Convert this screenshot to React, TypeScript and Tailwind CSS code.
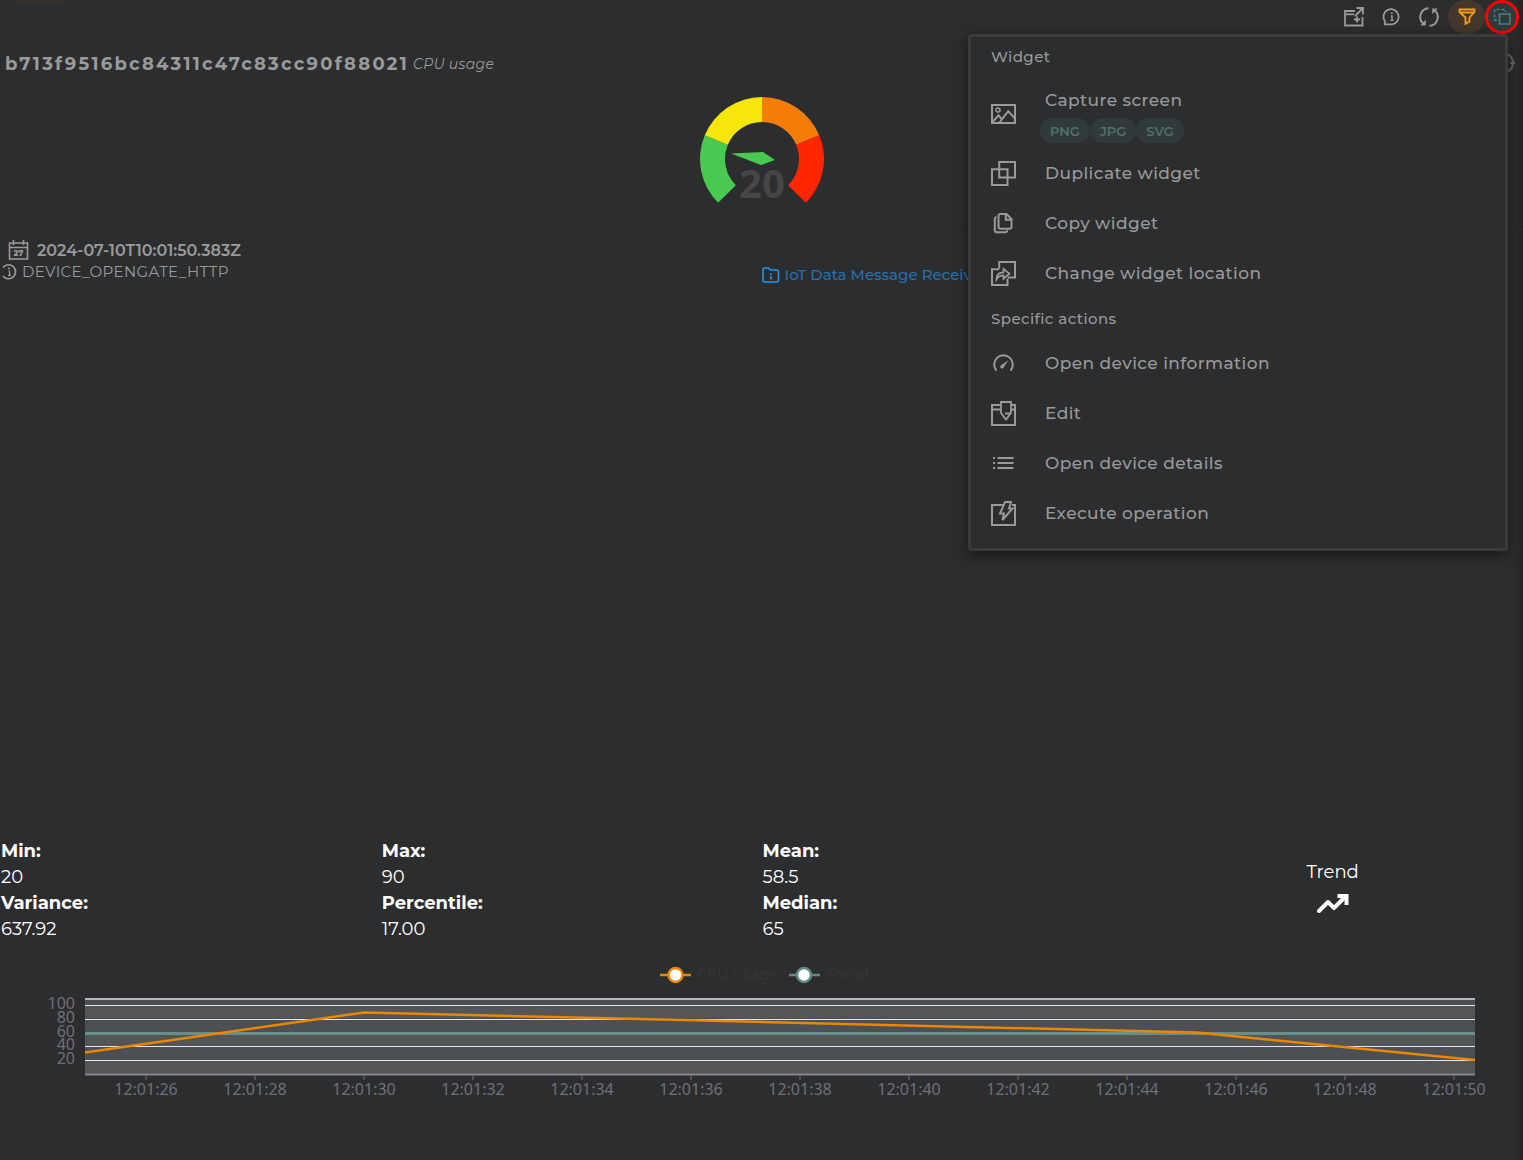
import type { ReactNode } from 'react';

const tools = [
  { id: 'open', label: 'Open in new window' },
  { id: 'info', label: 'Information' },
  { id: 'refresh', label: 'Refresh' },
];

const widgetActions = [
  { icon: 'duplicate', label: 'Duplicate widget' },
  { icon: 'copy', label: 'Copy widget' },
  { icon: 'location', label: 'Change widget location' },
];

const specificActions = [
  { icon: 'gauge', label: 'Open device information' },
  { icon: 'edit', label: 'Edit' },
  { icon: 'list', label: 'Open device details' },
  { icon: 'execute', label: 'Execute operation' },
];

const stats = [
  [{ label: 'Min:', value: '20' }, { label: 'Variance:', value: '637.92' }],
  [{ label: 'Max:', value: '90' }, { label: 'Percentile:', value: '17.00' }],
  [{ label: 'Mean:', value: '58.5' }, { label: 'Median:', value: '65' }],
];

const toolIcons: Record<string, ReactNode> = {
  open: (
    <g strokeWidth="1.8">
      <path d="M14 6H4v14.500h17.500V12" />
      <path d="M4 9.300h9" />
      <path d="M14 11 21 4M15.500 3H22v6.500" />
      <path d="M16 11.500v6M13 14.500h6" />
    </g>
  ),
  info: (
    <>
      <path d="M5.800 19.300v-3.200A7.600 7.600 0 1 1 13 19.300z" strokeWidth="1.800" />
      <path d="M12 11h1v4M11.500 15.200h3" strokeWidth="1.400" />
      <circle cx="12.800" cy="8.300" r="1" fill="currentColor" stroke="none" />
    </>
  ),
  refresh: (
    <>
      <path d="M11.500 3.200A8.800 8.800 0 0 0 6.500 18.800M12.500 20.800A8.800 8.800 0 0 0 17.500 5.200" />
      <path d="M8.800 14.800v5.700H3.300zM15.200 9.200V3.500h5.500z" fill="currentColor" stroke="none" />
    </>
  ),
};

const menuIcons: Record<string, ReactNode> = {
  image: (
    <>
      <path d="M2 4h23v18H2z" />
      <circle cx="8" cy="9" r="2" strokeWidth="1.600" />
      <path d="m3 20.500 5.500-6.200 3.300 4 6.400-8L24.500 17M9.500 21.500l3-4" />
    </>
  ),
  duplicate: <path d="M9.200 2H25v15.500H9.200zM2 9.200h15.500V25H2z" />,
  copy: (
    <>
      <path d="M10.300 4h6.200l5 5v8a1.800 1.800 0 0 1-1.800 1.800h-9.400A1.800 1.800 0 0 1 8.500 17V5.800A1.800 1.800 0 0 1 10.300 4z" />
      <path d="M15.800 4v5.700h5.500" />
      <path d="M6.500 7A2 2 0 0 0 4.800 9v11.300A2 2 0 0 0 6.800 22.300h8.400a2 2 0 0 0 2-2" />
    </>
  ),
  location: (
    <>
      <path d="M9.200 8.500V2H25v15.500h-7M9.200 9.200H2V25h15.500v-6.500" />
      <path d="M6.500 19.500c0-5 2.500-7.200 7-7.200V8.800l6 5-6 5v-3.500c-3 0-5.200 1-7 4.200z" strokeWidth="1.800" />
    </>
  ),
  gauge: (
    <>
      <path d="M6.500 20.700A9.300 9.300 0 1 1 20.500 20.700" />
      <path d="m18.500 10-7.700 5.500a1.700 1.700 0 1 0 2.400 2.400z" fill="currentColor" stroke="none" />
    </>
  ),
  edit: (
    <>
      <path d="M10.500 5H2v20h23V5h-4M2 9.500h8M21 9.500h4" />
      <path d="M11 2h10v11l-5 6.500-5-6.500zM15 13.500h6" strokeWidth="1.800" />
    </>
  ),
  list: (
    <path d="M7.500 8H23.500M7.500 13H23.500M7.500 18H23.500M3 8h2M3 13h2M3 18h2" />
  ),
  execute: (
    <>
      <path d="M13 5H2v20h23V5h-3" />
      <path d="M15 2h6l-2 6.500h3.500L12.500 20l1.500-6.500h-4z" />
    </>
  ),
};

function MenuIcon({ name }: { name: string }) {
  return (
    <svg className="h-[26px] w-[26px] shrink-0" viewBox="1 0 26 26" fill="none" stroke="currentColor" strokeWidth="2" aria-hidden="true">
      {menuIcons[name]}
    </svg>
  );
}

function MenuItem({ icon, label }: { icon: string; label: string }) {
  return (
    <li>
      <button type="button" className="flex h-[50px] w-full items-center gap-7 px-5 text-left tracking-wide">
        <MenuIcon name={icon} />
        <span>{label}</span>
      </button>
    </li>
  );
}

function WidgetMenu() {
  return (
    <div className="absolute right-[15px] top-[34px] w-[540px] rounded border-[3px] border-[#3a3b3d] bg-[#2c2d2f] pb-[10px] text-[17px] font-medium leading-6 tracking-wide text-[#999a9a] shadow-[0_4px_14px_rgba(0,0,0,0.5)]">
      <h2 className="px-5 pt-2 text-[15px] leading-6">Widget</h2>
      <div className="flex h-[79px] items-center gap-7 px-5 pt-[10px]">
        <MenuIcon name="image" />
        <div className="flex flex-col gap-1 pt-[2px]">
          <span className="leading-7">Capture screen</span>
          <div className="-ml-[5px] flex">
            {['PNG', 'JPG', 'SVG'].map((format) => (
              <button key={format} type="button" className="h-[25px] rounded-full bg-[#313a3b] px-[10px] text-[13px] font-semibold leading-6 tracking-normal text-[#4e6f6b]">
                {format}
              </button>
            ))}
          </div>
        </div>
      </div>
      <ul>
        {widgetActions.map((a) => <MenuItem key={a.label} {...a} />)}
      </ul>
      <h2 className="px-5 pb-[7px] pt-[9px] text-[15px] leading-6">Specific actions</h2>
      <ul>
        {specificActions.map((a) => <MenuItem key={a.label} {...a} />)}
      </ul>
    </div>
  );
}

// Point on the dial, angle in degrees counter-clockwise from the right
function polar(r: number, deg: number) {
  const a = (deg * Math.PI) / 180;
  return `${63 + r * Math.cos(a)} ${63 - r * Math.sin(a)}`;
}

function Gauge() {
  const colors = ['#49c950', '#f7e60b', '#f47d07', '#ff2600'];
  return (
    <svg className="h-[126px] w-[126px]" viewBox="0 0 126 126" role="img" aria-label="CPU usage 20">
      {colors.map((color, i) => {
        const from = 225 - i * 67.5;
        const to = from - 67.5;
        return (
          <path
            key={color}
            fill={color}
            d={`M${polar(62, from)}A62 62 0 0 1 ${polar(62, to)}L${polar(37, to)}A37 37 0 0 0 ${polar(37, from)}z`}
          />
        );
      })}
      <path d="M32 57.500 64 56l12 8-14 5z" fill="#49c950" />
      <text x="63" y="102" textAnchor="middle" fill="#464646" className="font-['Noto_Sans',sans-serif] text-[40px] font-bold">20</text>
    </svg>
  );
}

function Chart() {
  const toY = (v: number) => 118 - v * 0.69;
  const bands = [0, 20, 40, 60, 80, 100];
  return (
    <svg className="w-full" viewBox="0 0 1523 150" role="img" aria-label="CPU usage over time" fontSize="16" fill="#6e7079">
      <g strokeWidth="2.500">
        <path d="M660 19h31" stroke="#e88700" />
        <circle cx="675.500" cy="19" r="7" fill="#fff" stroke="#e88700" />
        <path d="M789 19h31" stroke="#5f8a87" />
        <circle cx="804" cy="19" r="7" fill="#fff" stroke="#5f8a87" />
      </g>
      <text x="697" y="24" fill="#333435">CPU usage</text>
      <text x="826" y="24" fill="#333435">Trend</text>

      {bands.map((v, i) => (
        <rect key={v} x="85" width="1390" y={v === 100 ? 42 : toY(v + 20)} height={v === 100 ? 7 : 13.8} fill={i % 2 ? '#4c4f54' : '#545557'} />
      ))}
      <path d="M85 43h1390" stroke="#b4b5bc" strokeWidth="2" />
      {[100, 80, 40, 20].map((v) => (
        <path key={v} d={`M85 ${Math.round(toY(v)) + 0.5}h1390`} stroke="#e0e6f1" />
      ))}
      <path d="M85 77.500h1390" stroke="#668f8c" strokeWidth="3" />
      <path d="M85 96.500 364 56.500 640 63l557 13.500 278 27.500" fill="none" stroke="#e88700" strokeWidth="2.500" strokeLinejoin="round" />
      <path d="M85 118.500h1390" stroke="#85868d" strokeWidth="2" />

      {[20, 40, 60, 80, 100].map((v) => (
        <text key={v} x="75" y={toY(v) + 4} textAnchor="end">{v}</text>
      ))}
      {Array.from({ length: 13 }, (_, i) => (
        <g key={i}>
          <path d={`M${146 + i * 109} 119v5`} stroke="#6e7079" />
          <text x={146 + i * 109} y="139" textAnchor="middle">12:01:{26 + i * 2}</text>
        </g>
      ))}
    </svg>
  );
}

export default function App() {
  return (
    <div className="relative flex min-h-screen flex-col overflow-hidden bg-[#2c2d2f] font-['Montserrat','Inter',sans-serif] text-[#999a9a] shadow-[inset_-6px_0_6px_-4px_rgba(0,0,0,0.35)]">
      {/* lower edge of the tab marker */}
      <div className="absolute left-4 top-0 h-[3px] w-12 rounded-b-full bg-[#37302a]" />

      <header className="flex h-[34px] items-center justify-end pr-1">
        {tools.map((tool) => (
          <button key={tool.id} type="button" aria-label={tool.label} className="flex w-[38px] justify-center">
            <svg className="h-6 w-6" viewBox="0 0 24 24" fill="none" stroke="currentColor" strokeWidth="2" aria-hidden="true">
              {toolIcons[tool.id]}
            </svg>
          </button>
        ))}
        <button type="button" aria-label="Filter" className="flex h-[34px] w-[37px] items-center justify-center rounded-full bg-[#43382b] text-[#f99b1c]">
          <svg className="h-6 w-6" viewBox="0 0 24 24" fill="none" stroke="currentColor" strokeWidth="1.800" aria-hidden="true">
            <path d="M4.500 4.500h15v2.500l-5 5.500v4L10.500 19v-6.500L4.500 7zM5 7.500h14" />
          </svg>
        </button>
        <button type="button" aria-label="Widget menu" className="flex h-[34px] w-[34px] items-center justify-center rounded-full border-[3px] border-[#ff0000] bg-[#2e3b3c] text-[#4f7f7c]">
          <svg className="h-6 w-6" viewBox="0 0 24 24" fill="none" stroke="currentColor" strokeWidth="1.600" aria-hidden="true">
            <path d="M9.500 9h10.500v10H9.500z" />
            <path d="M7 15H4.500V4.500H15.500V7" strokeDasharray="3 2" />
          </svg>
        </button>
      </header>

      <div className="flex h-[58px] items-center justify-between pl-[5px] pr-2">
        <h1 className="flex items-center gap-1 pt-[2px]">
          <span className="text-[18px] font-bold leading-6 tracking-[0.125em]">b713f9516bc84311c47c83cc90f88021</span>
          <span className="text-[14px] italic leading-6 tracking-wide">CPU usage</span>
        </h1>
        <button type="button" aria-label="Settings" className="text-[#626365]">
          <svg className="h-6 w-6" viewBox="0 0 24 24" fill="none" stroke="currentColor" strokeWidth="2" aria-hidden="true">
            <circle cx="12" cy="12" r="10" />
            <path d="M19 12h5" />
          </svg>
        </button>
      </div>

      <div className="flex h-[138px] justify-center border-b border-[#28292b] pt-1">
        <Gauge />
      </div>

      <section className="grid grid-cols-2 pt-2">
        <div>
          <p className="flex items-center gap-2 pl-2 text-[16px] font-semibold leading-6">
            <svg className="h-[22px] w-[21px]" viewBox="0 0 21 22" fill="none" stroke="currentColor" strokeWidth="1.600" aria-hidden="true">
              <path d="M1.500 4h18v16h-18zM1.500 8.500h18M5.500 1v5M15.500 1v5" />
              <text x="10.500" y="17" textAnchor="middle" fill="currentColor" stroke="none" fontSize="8" fontWeight="800">27</text>
            </svg>
            <time className="pt-[2px] leading-[22px]">2024-07-10T10:01:50.383Z</time>
          </p>
          <p className="flex items-center gap-1 text-[15px] leading-5 tracking-wide">
            <svg className="h-[18px] w-[18px]" viewBox="0 0 18 18" fill="none" stroke="currentColor" strokeWidth="1.600" aria-hidden="true">
              <path d="M3 4.500a7 7 0 1 1 0 8.500" />
              <path d="M8.500 8h1v4M8 12.300h3" strokeWidth="1.200" />
              <circle cx="9" cy="5.500" r="1" fill="currentColor" stroke="none" />
            </svg>
            DEVICE_OPENGATE_HTTP
          </p>
        </div>
        <a href="#messages" className="flex items-center gap-[5px] pt-[27px] text-[15px] font-medium leading-5 text-[#2370b0]">
          <svg className="h-[18px] w-[18px]" viewBox="0 0 18 18" fill="none" stroke="#2196f3" strokeWidth="1.600" aria-hidden="true">
            <path d="M1 3.500a1.500 1.500 0 0 1 1.500-1.500h4l2 2h6.500a1.500 1.500 0 0 1 1.500 1.500v9a1.500 1.500 0 0 1-1.500 1.500h-12.500a1.500 1.500 0 0 1-1.500-1.500z" />
            <path d="M9 7.500v1.500M9 10v3.500" />
          </svg>
          IoT Data Message Received
        </a>
      </section>

      <section className="mt-auto grid grid-cols-4 items-center text-[18px] text-white">
        {stats.map((column) => (
          <dl key={column[0].label} className="pl-px">
            {column.map((s) => (
              <div key={s.label} className="leading-[26px]">
                <dt className="font-bold">{s.label}</dt>
                <dd>{s.value}</dd>
              </div>
            ))}
          </dl>
        ))}
        <div className="flex flex-col items-center">
          <span>Trend</span>
          <svg className="h-9 w-9" viewBox="0 0 36 36" fill="none" stroke="currentColor" strokeWidth="4" strokeLinejoin="round" aria-label="Rising">
            <path d="m4 25 9-9 6 6L30 11" strokeLinecap="round" />
            <path d="M22.500 10H31.500v9" strokeLinejoin="miter" />
          </svg>
        </div>
      </section>

      <div className="pb-[54px] pt-[14px] font-['Noto_Sans',sans-serif]">
        <Chart />
      </div>

      <WidgetMenu />
    </div>
  );
}
